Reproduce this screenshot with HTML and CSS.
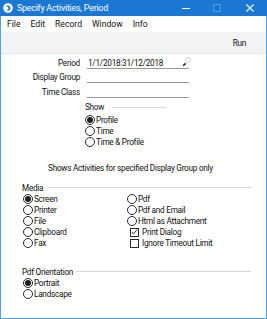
FILE: index.html
```html
<!DOCTYPE html>
<html>
<head>
<meta charset="utf-8">
<link rel="stylesheet" href="styles.css">
</head>
<body>
<div class="window">
  <div class="titlebar">
    <svg class="appicon" width="10" height="10" viewBox="0 0 10 10">
      <circle cx="5" cy="5" r="4.8" fill="#fff"/>
      <path d="M2.6 3.2 Q5 1.6 7 3.4 Q8.2 5.4 6.8 7 Q5.2 8.2 3.6 7.2 Q5.6 6.6 5.6 5.1 Q5.2 3.6 2.6 3.2Z" fill="#1a78d4"/>
    </svg>
    <span class="title">Specify Activities, Period</span>
    <div class="winbtns">
      <svg class="wmin" width="8" height="8" viewBox="0 0 8 8"><path d="M0 4.5H8" stroke="#fff" stroke-width="1"/></svg>
      <svg class="wmax" width="8" height="8" viewBox="0 0 8 8"><rect x="0.5" y="0.5" width="7" height="7" fill="none" stroke="#4d9ae0" stroke-width="1"/></svg>
      <svg class="wclose" width="8" height="8" viewBox="0 0 8 8"><path d="M0.5 0.5L7.5 7.5M7.5 0.5L0.5 7.5" stroke="#fff" stroke-width="1.1"/></svg>
    </div>
  </div>
  <div class="menubar">
    <span>File</span><span>Edit</span><span>Record</span><span>Window</span><span>Info</span>
  </div>
  <div class="toolbar"><span class="run">Run</span></div>
  <div class="content">
    <div class="fields">
      <label>Period</label>
      <div class="field period">1/1/2018:31/12/2018
        <svg class="pick" width="9" height="10" viewBox="0 0 9 10"><circle cx="6" cy="3.2" r="2.6" fill="#fff" stroke="#c8c8c8" stroke-width="0.8"/><path d="M1.2 8.8L3.6 6.4" stroke="#222" stroke-width="1.6"/></svg>
      </div>
      <label>Display Group</label>
      <div class="field"></div>
      <label>Time Class</label>
      <div class="field"></div>
    </div>
    <div class="show">
      <div class="grouphead"><span>Show</span><i class="rule short"></i></div>
      <div class="opts">
        <div class="opt"><span class="radio on"></span>Profile</div>
        <div class="opt"><span class="radio"></span>Time</div>
        <div class="opt"><span class="radio"></span>Time &amp; Profile</div>
      </div>
    </div>
    <p class="hint">Shows Activities for specified Display Group only</p>
    <div class="section media">
      <div class="grouphead"><span>Media</span><i class="rule"></i></div>
      <div class="cols">
        <div class="col">
          <div class="opt"><span class="radio on"></span>Screen</div>
          <div class="opt"><span class="radio"></span>Printer</div>
          <div class="opt"><span class="radio"></span>File</div>
          <div class="opt"><span class="radio"></span>Clipboard</div>
          <div class="opt"><span class="radio"></span>Fax</div>
        </div>
        <div class="col right">
          <div class="opt"><span class="radio"></span>Pdf</div>
          <div class="opt"><span class="radio"></span>Pdf and Email</div>
          <div class="opt"><span class="radio"></span>Html as Attachment</div>
          <div class="opt chk"><span class="check on"><svg width="8" height="8" viewBox="0 0 8 8"><path d="M1 4L3 6.2L7 1" fill="none" stroke="#222" stroke-width="1"/></svg></span>Print Dialog</div>
          <div class="opt chk"><span class="check"></span>Ignore Timeout Limit</div>
        </div>
      </div>
    </div>
    <div class="section orient">
      <div class="grouphead"><span>Pdf Orientation</span><i class="rule"></i></div>
      <div class="opt"><span class="radio on"></span>Portrait</div>
      <div class="opt"><span class="radio"></span>Landscape</div>
    </div>
  </div>
</div>
</body>
</html>
```
FILE: styles.css
```css
* { box-sizing: border-box; }
html, body { margin: 0; padding: 0; background: #fff; }
body {
  font-family: Roboto, "Noto Sans", sans-serif;
  font-size: 8.2px;
  letter-spacing: -0.25px;
  color: #111;
  width: 267px;
  height: 319px;
  overflow: hidden;
}
.window {
  width: 267px;
  height: 319px;
  border: 1px solid #4aa3e6;
  border-top: none;
  display: flex;
  flex-direction: column;
}
.titlebar {
  height: 16px;
  margin: 0 -1px;
  background: #1a78d4;
  display: flex;
  align-items: center;
  color: #fff;
  padding-left: 3px;
}
.appicon { margin-right: 4px; }
.title { font-size: 8.8px; letter-spacing: -0.2px; flex: 1; }
.winbtns { display: flex; align-items: center; padding-right: 13px; }
.wmin { margin-right: 23px; }
.wmax { margin-right: 25px; }
.menubar {
  height: 16px;
  display: flex;
  align-items: center;
  gap: 10px;
  padding-left: 6px;
  background: #fff;
  font-size: 8.6px;
  letter-spacing: 0;
}
.toolbar {
  height: 22px;
  background: #f2f3f5;
  border-bottom: 1px solid #e6e7e9;
  display: flex;
  align-items: center;
  justify-content: flex-end;
  padding-right: 20px;
}
.content { flex: 1; }
.fields {
  display: grid;
  grid-template-columns: 79px 102px;
  column-gap: 7px;
  row-gap: 3.5px;
  margin-top: 3.5px;
}
.fields label { text-align: right; line-height: 11px; }
.field {
  height: 11px;
  border-bottom: 1px solid #9a9a9a;
  line-height: 11px;
  padding-left: 1px;
  position: relative;
}
.pick { position: absolute; right: -2px; top: -1px; }
.show { margin-left: 84px; margin-top: 4px; }
.opts { margin-top: 2px; }
.grouphead { display: flex; align-items: center; gap: 8px; height: 11px; }
.rule { flex: 1; height: 1px; background: #d6d6d6; display: block; }
.rule.short { flex: 0 0 54px; }
.opt { display: flex; align-items: center; height: 11.2px; gap: 1px; }
.radio {
  width: 10px; height: 10px;
  border: 1px solid #2a2a2a;
  border-radius: 50%;
  display: inline-flex;
  align-items: center;
  justify-content: center;
  background: #fff;
  flex: none;
}
.radio.on::after {
  content: "";
  width: 6px; height: 6px;
  border-radius: 50%;
  background: #1e1e1e;
}
.check {
  width: 9px; height: 9px;
  border: 1px solid #2a2a2a;
  display: inline-flex;
  align-items: center;
  justify-content: center;
  margin-left: 3px;
  margin-right: 2px;
  flex: none;
}
.hint { margin: 15px 0 0 0; text-align: center; padding-right: 6px; line-height: 11px; }
.section { margin-left: 21px; margin-right: 15px; }
.media { margin-top: 8px; }
.media .grouphead { gap: 5px; }
.cols { display: grid; grid-template-columns: 104px 1fr; margin-left: 1px; }
.orient { margin-top: 17px; }
.orient .grouphead { gap: 3px; }
.orient .opt { margin-left: 1px; }
```
